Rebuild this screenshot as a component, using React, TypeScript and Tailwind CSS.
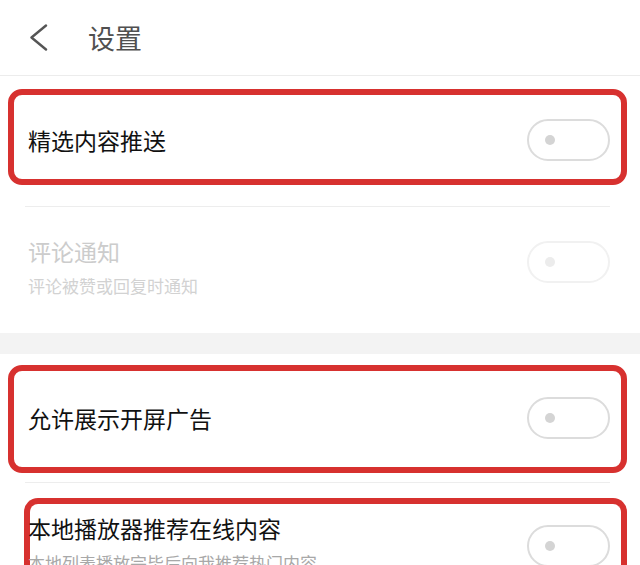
import React from "react";

const FONT = { fontFamily: '"Noto Sans CJK SC", "Noto Sans", sans-serif' };

function Toggle({ disabled = false }: { disabled?: boolean }) {
  return (
    <div
      className={`w-[83px] h-[42px] shrink-0 rounded-full border-2 flex items-center pl-[16px] ${
        disabled ? "border-[#f1f1f1]" : "border-[#dcdcdc]"
      }`}
    >
      <div className={`w-[10px] h-[10px] rounded-full ${disabled ? "bg-[#ececec]" : "bg-[#d4d4d4]"}`} />
    </div>
  );
}

export default function App() {
  return (
    <div className="w-[640px] h-[565px] overflow-hidden bg-white" style={FONT}>
      {/* header */}
      <header className="h-[76px] flex items-center border-b border-[#ececec]">
        <svg className="ml-[29px]" width="20" height="28" viewBox="0 0 20 28" fill="none">
          <path d="M17 1.5 L2.5 13.5 L17 25.5" stroke="#555" strokeWidth="2.4" strokeLinecap="round" strokeLinejoin="round" />
        </svg>
        <span className="ml-[39px] text-[27px] leading-none text-[#505050]">设置</span>
      </header>

      {/* push section */}
      <div className="ml-[8px] mr-[13px] mt-[13px] h-[96px] border-[6px] border-[#d7312f] rounded-[14px] flex items-center justify-between pl-[14px] pr-[11px] pt-[5px]">
        <span className="text-[23px] leading-[32px] text-[#111111]">精选内容推送</span>
        <Toggle />
      </div>

      <div className="mt-[21px] ml-[25px] mr-[30px] border-t border-[#ededed]" />

      <div className="h-[126px] flex items-start justify-between pl-[28px] pr-[30px] pt-[28px]">
        <div className="flex flex-col">
          <span className="text-[23px] leading-[32px] text-[#cccccc]">评论通知</span>
          <span className="mt-[7px] text-[17px] leading-[24px] text-[#d2d2d2]">评论被赞或回复时通知</span>
        </div>
        <div className="mt-[6px]">
          <Toggle disabled />
        </div>
      </div>

      <div className="h-[21px] bg-[#f3f3f3]" />

      {/* ad section */}
      <div className="ml-[8px] mr-[13px] mt-[11px] h-[108px] border-[6px] border-[#d7312f] rounded-[14px] flex items-center justify-between pl-[14px] pr-[11px] pb-[3px]">
        <span className="text-[23px] leading-[32px] text-[#111111]">允许展示开屏广告</span>
        <Toggle />
      </div>

      <div className="mt-[9px] ml-[25px] mr-[30px] border-t border-[#ededed]" />

      <div className="ml-[24px] mr-[13px] mt-[15px] h-[80px] border-[6px] border-b-0 border-[#d7312f] rounded-t-[14px] flex items-start justify-between pr-[11px]">
        <div className="flex flex-col -ml-[2px] pt-[8px]">
          <span className="text-[23px] leading-[32px] text-[#111111]">本地播放器推荐在线内容</span>
          <span className="mt-[7px] text-[17px] leading-[24px] text-[#a8a8a8]">本地列表播放完毕后向我推荐热门内容</span>
        </div>
        <div className="mt-[21px]">
          <Toggle />
        </div>
      </div>
    </div>
  );
}
